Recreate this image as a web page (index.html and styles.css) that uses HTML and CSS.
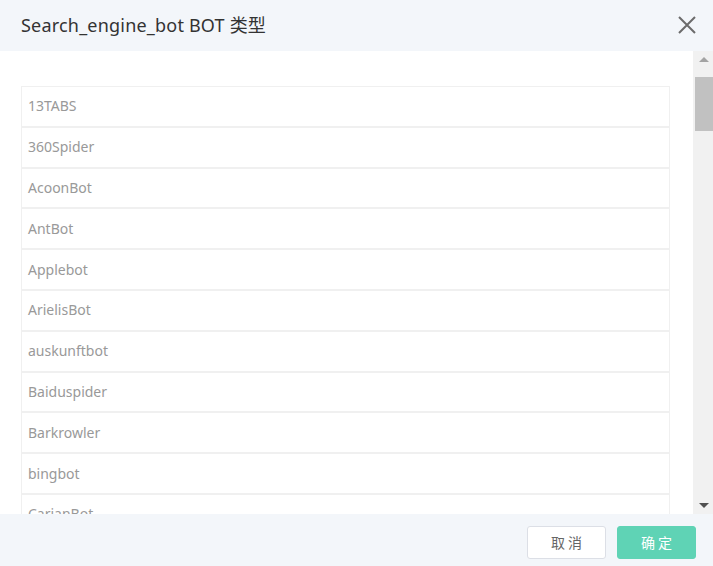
FILE: index.html
```html
<!DOCTYPE html>
<html>
<head>
<meta charset="utf-8">
<link rel="stylesheet" href="styles.css">
</head>
<body>
<div class="dialog">
  <div class="header">
    <div class="title">Search_engine_bot BOT 类型</div>
    <svg class="close" width="20" height="20" viewBox="0 0 20 20"><path d="M2 2 L18 18 M18 2 L2 18" stroke="#6b6b6b" stroke-width="2" fill="none"/></svg>
  </div>
  <div class="body">
    <div class="content">
      <div class="list">
        <div class="row">13TABS</div>
        <div class="row">360Spider</div>
        <div class="row">AcoonBot</div>
        <div class="row">AntBot</div>
        <div class="row">Applebot</div>
        <div class="row">ArielisBot</div>
        <div class="row">auskunftbot</div>
        <div class="row">Baiduspider</div>
        <div class="row">Barkrowler</div>
        <div class="row">bingbot</div>
        <div class="row">CarianBot</div>
      </div>
    </div>
    <div class="scrollbar">
      <div class="arrow up"></div>
      <div class="track"><div class="thumb"></div></div>
      <div class="arrow down"></div>
    </div>
  </div>
  <div class="footer">
    <button class="btn cancel">取消</button>
    <button class="btn ok">确定</button>
  </div>
</div>
</body>
</html>
```

FILE: styles.css
```css
html, body {
  margin: 0;
  padding: 0;
  width: 713px;
  height: 566px;
  overflow: hidden;
  background: #fff;
  font-family: "Noto Sans", "Noto Sans CJK SC", sans-serif;
}
.dialog {
  display: flex;
  flex-direction: column;
  width: 713px;
  height: 566px;
}
.header {
  height: 51px;
  flex: none;
  background: #f3f6fa;
  display: flex;
  align-items: center;
  justify-content: space-between;
  padding: 0 16px 0 21px;
  box-sizing: border-box;
}
.title {
  font-size: 18px;
  color: #333;
  margin-top: -4px;
  letter-spacing: 0.2px;
}
.close {
  display: block;
  margin-top: -2px;
}
.body {
  height: 463px;
  flex: none;
  display: flex;
  background: #fff;
}
.content {
  flex: 1;
  overflow: hidden;
  padding: 35px 23px 0 21px;
}
.list {
  display: flex;
  flex-direction: column;
}
.row {
  height: 38.8px;
  border: 1px solid #f0f0f0;
  padding-left: 6px;
  padding-bottom: 1px;
  box-sizing: content-box;
  display: flex;
  align-items: center;
  font-size: 14px;
  color: #999;
  flex: none;
}
.row {
  height: 37.8px;
}
.scrollbar {
  width: 20px;
  flex: none;
  background: #f1f1f1;
  display: flex;
  flex-direction: column;
  align-items: flex-end;
}
.arrow {
  width: 18px;
  height: 17px;
  position: relative;
  flex: none;
}
.arrow::after {
  content: "";
  position: absolute;
  left: 4px;
  width: 0;
  height: 0;
  border-left: 5px solid transparent;
  border-right: 5px solid transparent;
}
.arrow.up::after {
  top: 6px;
  border-bottom: 5px solid #a3a3a3;
}
.arrow.down::after {
  top: 6px;
  border-top: 5px solid #505050;
}
.track {
  flex: 1;
  width: 18px;
  padding-top: 9px;
}
.thumb {
  width: 18px;
  height: 54px;
  background: #c1c1c1;
}
.footer {
  flex: 1;
  background: #f3f6fa;
  display: flex;
  justify-content: flex-end;
  align-items: center;
  gap: 11px;
  padding-right: 17px;
  padding-top: 4px;
  box-sizing: border-box;
}
.btn {
  width: 79px;
  height: 33px;
  border-radius: 3px;
  font-size: 14px;
  letter-spacing: 3px;
  padding: 0 0 0 3px;
  font-family: "Noto Sans CJK SC", sans-serif;
  cursor: pointer;
}
.cancel {
  background: #fff;
  border: 1px solid #dcdfe6;
  color: #666;
}
.ok {
  background: #5fd3b5;
  border: 1px solid #5fd3b5;
  color: #fff;
}
```
